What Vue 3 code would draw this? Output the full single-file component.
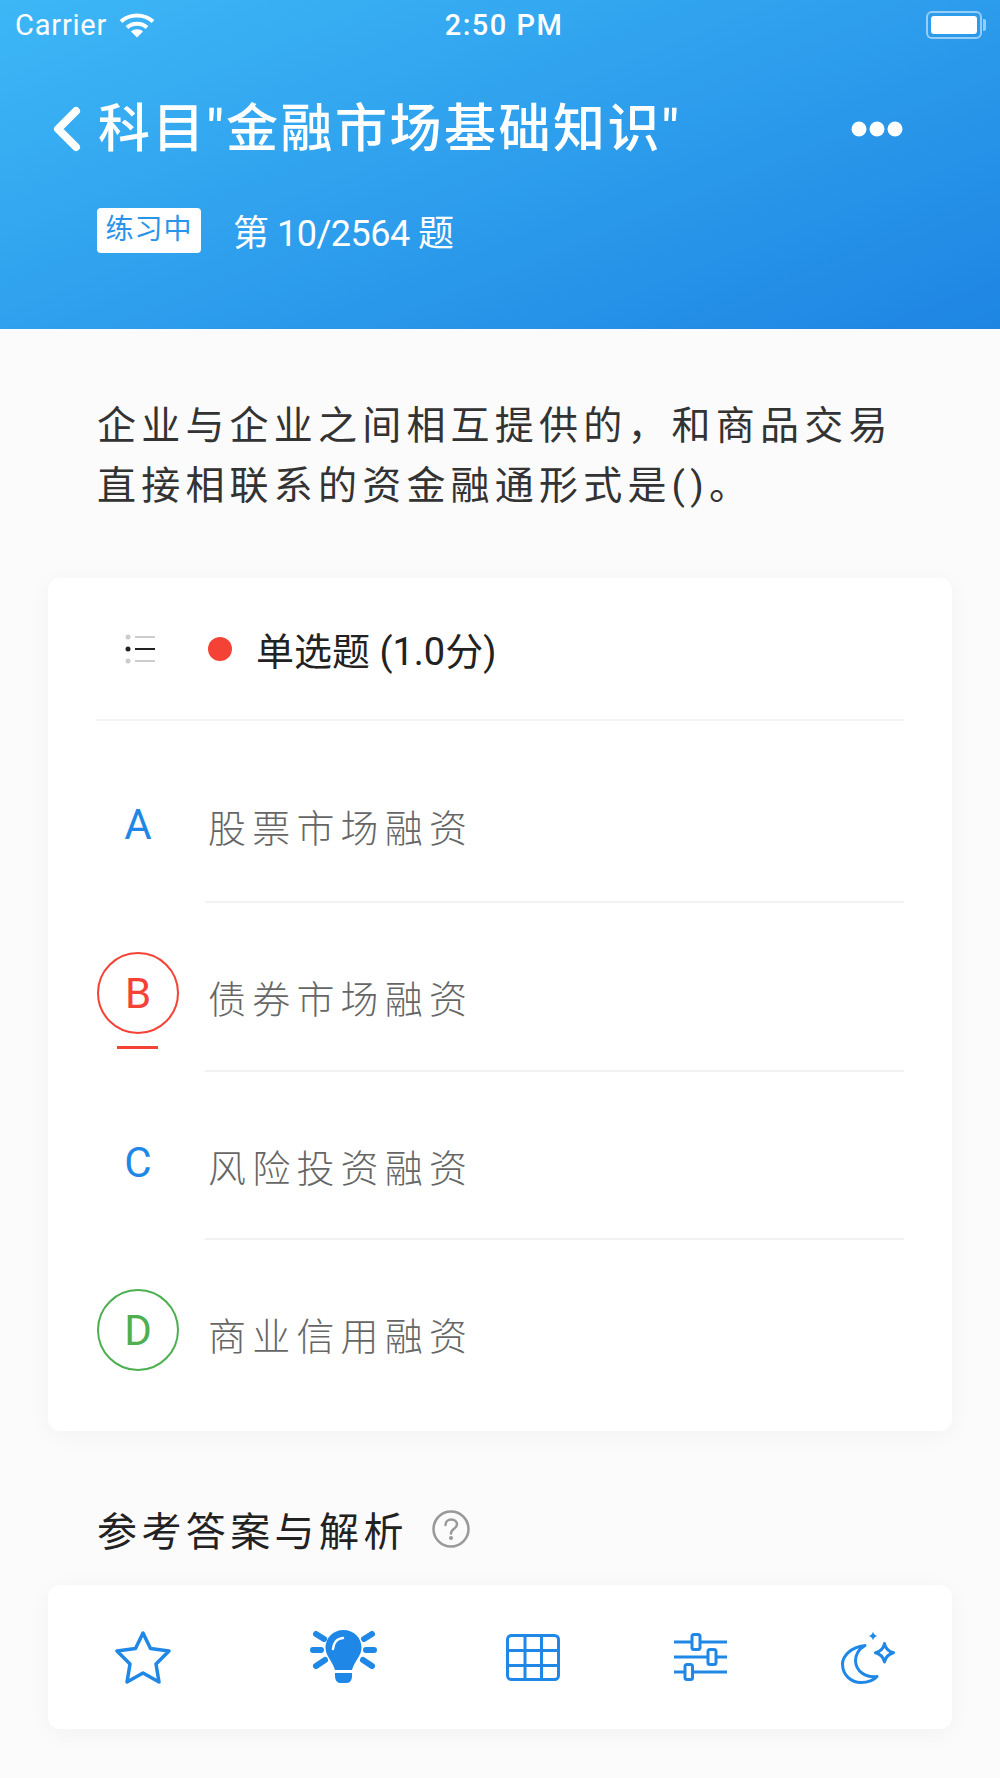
<script setup>
const options = [
  { key: 'A', text: '股票市场融资', state: '' },
  { key: 'B', text: '债券市场融资', state: 'wrong' },
  { key: 'C', text: '风险投资融资', state: '' },
  { key: 'D', text: '商业信用融资', state: 'right' },
];
</script>

<template>
  <div class="page">
    <header class="header">
      <div class="status">
        <div class="status-left">
          <span>Carrier</span>
          <svg class="wifi" width="36" height="25" viewBox="0 0 36 25" fill="none" stroke="#fff" stroke-width="4">
            <path d="M2 8.500C11 0.500 25 0.500 34 8.500" />
            <path d="M8 14.500C13.500 9.500 22.500 9.500 28 14.500" />
            <path d="M18 24.500L12 18.500C15 15.500 21 15.500 24 18.500Z" fill="#fff" stroke="none" />
          </svg>
        </div>
        <span class="time">2:50 PM</span>
        <div class="status-right">
          <div class="battery"><div class="battery-fill"></div></div>
        </div>
      </div>

      <div class="title-row">
        <svg class="back" width="30" height="46" viewBox="0 0 30 46" fill="none" stroke="#fff" stroke-width="8" stroke-linecap="round" stroke-linejoin="round">
          <path d="M24 5L6 23L24 41" />
        </svg>
        <h1 class="title">科目"金融市场基础知识"</h1>
        <svg class="more" width="52" height="16" viewBox="0 0 52 16" fill="#fff">
          <circle cx="8" cy="8" r="7.500" />
          <circle cx="26" cy="8" r="7.500" />
          <circle cx="44" cy="8" r="7.500" />
        </svg>
      </div>

      <div class="progress-row">
        <span class="tag">练习中</span>
        <span class="progress">第 10/2564 题</span>
      </div>
    </header>

    <p class="question">企业与企业之间相互提供的，和商品交易直接相联系的资金融通形式是()。</p>

    <section class="card">
      <div class="card-head">
        <svg class="list-icon" width="30" height="30" viewBox="0 0 30 30">
          <circle cx="3" cy="3" r="2.500" fill="#ccc" />
          <circle cx="3" cy="15" r="2.500" fill="#222" />
          <circle cx="3" cy="27" r="2.500" fill="#ccc" />
          <path d="M10 3H30M10 27H30" stroke="#ccc" stroke-width="2" />
          <path d="M10 15H30" stroke="#222" stroke-width="2" />
        </svg>
        <span class="dot"></span>
        <span class="type">单选题 (1.0分)</span>
      </div>

      <div v-for="item in options" :key="item.key" class="option">
        <div class="badge" :class="item.state">{{ item.key }}</div>
        <div class="option-body">
          <div class="option-text">{{ item.text }}</div>
        </div>
      </div>
    </section>

    <div class="answer-title">
      <span>参考答案与解析</span>
      <svg width="38" height="38" viewBox="0 0 38 38" fill="none">
        <circle cx="19" cy="19" r="17.500" stroke="#999" stroke-width="2.500" />
        <path d="M13.500 15C13.500 7.500 25 8 25 14.500C25 19 19 18.500 19 23.500" stroke="#999" stroke-width="2.500" stroke-linecap="round" />
        <circle cx="19" cy="28" r="2" fill="#999" />
      </svg>
    </div>

    <nav class="toolbar">
      <svg class="star" width="56" height="53" viewBox="0 0 56 53" fill="none" stroke="#1f88e6" stroke-width="3.500" stroke-linejoin="round">
        <path d="M28 2L35.500 17.500L54 20L41 33L44 51L28 42L12 51L15 33L2 20L20.500 17.500Z" />
      </svg>

      <svg class="bulb" width="67" height="54" viewBox="0 0 67 54" fill="none">
        <path d="M33.500 0C23 0 15.500 8 15.500 17.500C15.500 26 22 30 25 40H42C45 30 51.500 26 51.500 17.500C51.500 8 44 0 33.500 0Z" fill="#1f88e6" />
        <path d="M25 43H42V46C42 50 40 53 37 53H30C27 53 25 50 25 46Z" fill="#1f88e6" />
        <path d="M23 19C23.500 13 27 8.500 33 8" stroke="#fff" stroke-width="2.500" stroke-linecap="round" />
        <path d="M6 4L14 9M3 20H11M6 36L15 30M62 4L54 9M64 20H56M62 36L53 30" stroke="#1f88e6" stroke-width="6" stroke-linecap="round" />
      </svg>

      <svg class="grid-icon" width="54" height="47" viewBox="0 0 54 47" fill="none" stroke="#1f88e6" stroke-width="3">
        <rect x="1.500" y="1.500" width="51" height="44" rx="4" />
        <path d="M19 2V45M35.500 2V45M2 16.500H52M2 31.500H52" />
      </svg>

      <svg class="sliders" width="53" height="49" viewBox="0 0 53 49" fill="none" stroke="#1f88e6" stroke-width="3">
        <path d="M0 9H18M26 9H53M0 24H34M42 24H53M0 39H11M18 39H53" />
        <rect x="18" y="1.500" width="8" height="15" rx="2" />
        <rect x="34" y="16.500" width="8" height="15" rx="2" />
        <rect x="11" y="31.500" width="7.500" height="15" rx="2" />
      </svg>

      <svg class="moon" width="54" height="53" viewBox="0 0 54 53" fill="none" stroke="#1f88e6" stroke-width="3" stroke-linejoin="round">
        <path d="M24 14.500C9 16 1.500 26 1.500 33C1.500 44 10 51.500 20 51.500C27 51.500 33 49 36 45.500C24 47 15 40 14.500 30C14.500 24 18 18 24 14.500Z" />
        <path d="M43.500 12.500C44.500 17.500 47.500 20.500 52.500 21.700C47.500 23 44.500 26 43.500 31C42.500 26 39.500 23 34.500 21.700C39.500 20.500 42.500 17.500 43.500 12.500Z" />
        <path d="M32 0.500C32.500 3 34 4.500 36.500 5C34 5.500 32.500 7 32 9.500C31.500 7 30 5.500 27.500 5C30 4.500 31.500 3 32 0.500Z" fill="#1f88e6" stroke="none" />
      </svg>
    </nav>
  </div>
</template>

<style>
html,
body {
  margin: 0;
  background: #fbfbfb;
}
</style>

<style scoped>
.page {
  height: 1778px;
  overflow: hidden;
  background: #fbfbfb;
  font-family: Roboto, "Noto Sans CJK SC", sans-serif;
  color: #222;
}

.header {
  height: 329px;
  box-sizing: border-box;
  background: linear-gradient(158deg, #3db7f6 0%, #1e85e3 100%);
  color: #fff;
}

.status {
  display: flex;
  align-items: center;
  height: 50px;
  padding: 0 18px 0 15px;
  font-size: 29px;
  letter-spacing: 0.800px;
}

.status-left,
.status-right {
  flex: 1;
  display: flex;
  align-items: center;
}

.status-right {
  justify-content: flex-end;
}

.wifi {
  margin-left: 12px;
}

.time {
  margin-left: 11px;
  letter-spacing: 1.500px;
  font-weight: 500;
}

.battery {
  position: relative;
  box-sizing: border-box;
  width: 56px;
  height: 28px;
  padding: 3px;
  border: 2px solid rgba(255, 255, 255, 0.5);
  border-radius: 6px;
}

.battery::after {
  content: "";
  position: absolute;
  right: -6px;
  top: 6px;
  width: 3px;
  height: 12px;
  background: rgba(255, 255, 255, 0.5);
  border-radius: 0 2px 2px 0;
}

.battery-fill {
  height: 100%;
  background: #fff;
  border-radius: 3px;
}

.title-row {
  display: flex;
  align-items: center;
  margin-top: 44px;
  padding: 0 97px 0 52px;
  height: 70px;
}

.title {
  flex: 1;
  margin: 0 0 0 16px;
  padding-bottom: 10px;
  font-size: 52px;
  font-weight: 500;
  letter-spacing: 2.500px;
}

.progress-row {
  display: flex;
  align-items: center;
  margin-top: 40px;
  padding-left: 97px;
}

.tag {
  width: 104px;
  height: 45px;
  line-height: 44px;
  text-align: center;
  background: #fff;
  border-radius: 4px;
  color: #2a94ea;
  font-size: 28px;
  letter-spacing: 1px;
}

.progress {
  margin-left: 32px;
  font-size: 36px;
  letter-spacing: -0.500px;
}

.question {
  margin: 0;
  padding: 67px 96px 0 97px;
  height: 182px;
  font-size: 39px;
  line-height: 60px;
  letter-spacing: 5.200px;
  color: #333;
}

.card {
  height: 853px;
  box-sizing: border-box;
  margin: 0 48px;
  padding: 0 48px;
  background: #fff;
  border-radius: 12px;
  box-shadow: 0 4px 24px rgba(0, 0, 0, 0.04);
}

.card-head {
  display: flex;
  align-items: center;
  height: 143px;
  box-sizing: border-box;
  border-bottom: 2px solid #f4f4f4;
}

.list-icon {
  margin-left: 29px;
}

.dot {
  width: 24px;
  height: 24px;
  margin-left: 53px;
  border-radius: 50%;
  background: #f44336;
}

.type {
  margin-left: 24px;
  font-size: 38px;
}

.option {
  display: flex;
  height: 168.500px;
}

.option:nth-of-type(2) {
  height: 182px;
}

.badge {
  position: relative;
  flex: none;
  width: 82px;
  height: 82px;
  box-sizing: border-box;
  margin: 49px 0 0 1px;
  line-height: 79px;
  text-align: center;
  font-size: 42px;
  color: #1f88e6;
  border: 2px solid transparent;
  border-radius: 50%;
}

.option:nth-of-type(2) .badge {
  margin-top: 62px;
}

.badge.wrong {
  color: #f44336;
  border-color: #f44336;
}

.badge.wrong::after {
  content: "";
  position: absolute;
  left: 18px;
  bottom: -17px;
  width: 41px;
  height: 3px;
  background: #f44336;
}

.badge.right {
  color: #4caf50;
  border-color: #4caf50;
}

.option-body {
  flex: 1;
  margin-left: 26px;
  padding: 73px 0 0 3px;
  border-bottom: 2px solid #f2f2f2;
}

.option:nth-of-type(2) .option-body {
  padding-top: 84px;
}

.option:last-child .option-body {
  border-bottom: none;
}

.option-text {
  line-height: 48px;
  font-size: 38px;
  letter-spacing: 6.200px;
  font-weight: 300;
  color: #666;
}

.answer-title {
  display: flex;
  align-items: center;
  margin: 74px 0 0 97px;
  height: 48px;
  font-size: 40px;
  letter-spacing: 4.400px;
}

.answer-title svg {
  margin-left: 24px;
}

.toolbar {
  display: flex;
  align-items: center;
  height: 144px;
  box-sizing: border-box;
  margin: 32px 48px 0;
  padding-left: 67px;
  background: #fff;
  border-radius: 12px;
  box-shadow: 0 4px 24px rgba(0, 0, 0, 0.04);
}

.bulb {
  margin-left: 139px;
}

.grid-icon {
  margin-left: 129px;
}

.sliders {
  margin-left: 114px;
}

.moon {
  margin-left: 114px;
}
</style>
